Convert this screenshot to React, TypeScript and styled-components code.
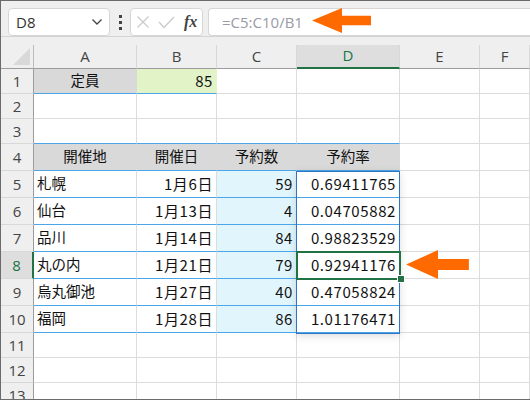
import styled, { createGlobalStyle } from "styled-components";

const GlobalStyle = createGlobalStyle`
  html, body {
    margin: 0;
    padding: 0;
    background: #fff;
  }
`;

const BLUE_LINE = "#4aa6e8";
const GRID_LINE = "#dcdcdc";

const Frame = styled.div`
  position: relative;
  width: 530px;
  height: 400px;
  box-sizing: border-box;
  border-top: 1px solid #6b6b6b;
  border-left: 1px solid #6b6b6b;
  border-bottom: 1px solid #6b6b6b;
  overflow: hidden;
  background: #fff;
  font-family: "Noto Sans CJK JP", "Open Sans", sans-serif;
`;
const Toolbar = styled.div`
  display: flex;
  align-items: stretch;
  height: 36px;
  padding: 7px 0 0 7px;
  box-sizing: border-box;
  background: #efefef;
  border-bottom: 1px solid #d4d4d4;
`;
const Box = styled.div`
  background: #fff;
  border: 1px solid #d6d6d6;
  border-radius: 4px;
  box-sizing: border-box;
  display: flex;
  align-items: center;
`;
const NameBox = styled(Box)`
  width: 102px;
  justify-content: space-between;
  padding: 0 6px 0 7px;
  font-family: "Open Sans", sans-serif;
  font-size: 15px;
  color: #333;
`;
const Dots = styled.div`
  width: 20px;
  display: flex;
  flex-direction: column;
  align-items: center;
  justify-content: center;
  gap: 3px;
  i {
    display: block;
    width: 3px;
    height: 3px;
    background: #444;
  }
`;
const FxBox = styled(Box)`
  width: 73px;
  gap: 9px;
  padding: 0 0 0 6px;
`;
const FxText = styled.span`
  font-family: "Liberation Serif", serif;
  font-style: italic;
  font-weight: bold;
  font-size: 16px;
  color: #444;
`;
const FormulaBox = styled(Box)`
  flex: 1;
  margin-left: 5px;
  padding-left: 13px;
  border-right: none;
  border-radius: 4px 0 0 4px;
  font-family: "Open Sans", sans-serif;
  font-size: 15px;
  color: #9a9aa6;
`;
const Band = styled.div`
  height: 8px;
  background: #efefef;
`;
const Sheet = styled.div`
  display: grid;
  grid-template-columns: 33px 103px 80px 80px 103px 80px 1fr;
  grid-template-rows: 24px 25px 25px 25px repeat(7, 27px) 25px 25px 25px;
`;
const Corner = styled.div`
  background: #efefef;
  border-right: 1px solid #bdbdbd;
  border-bottom: 1px solid #9c9c9c;
  box-sizing: border-box;
  display: flex;
  align-items: flex-end;
  justify-content: flex-end;
  padding: 0 3px 3px 0;
`;
const ColHead = styled.div<{ $active?: boolean }>`
  box-sizing: border-box;
  background: ${(p) => (p.$active ? "#dedede" : "#efefef")};
  border-right: 1px solid #d8d8d8;
  border-bottom: ${(p) => (p.$active ? "2px solid #217346" : "1px solid #9c9c9c")};
  color: ${(p) => (p.$active ? "#217346" : "#444")};
  font-family: "Open Sans", sans-serif;
  font-size: 15px;
  padding-bottom: 2px;
  display: flex;
  align-items: center;
  justify-content: center;
`;
const RowHead = styled.div<{ $active?: boolean }>`
  box-sizing: border-box;
  background: ${(p) => (p.$active ? "#dedede" : "#efefef")};
  border-right: ${(p) => (p.$active ? "2px solid #217346" : "1px solid #9c9c9c")};
  border-bottom: 1px solid #d8d8d8;
  color: ${(p) => (p.$active ? "#217346" : "#444")};
  font-family: "Open Sans", sans-serif;
  font-size: 15px;
  display: flex;
  align-items: center;
  justify-content: center;
`;
const Cell = styled.div<{
  $bg?: string;
  $align?: "left" | "right" | "center";
  $line?: boolean;
  $num?: boolean;
}>`
  box-sizing: border-box;
  background: ${(p) => p.$bg || "#fff"};
  border-right: 1px solid ${(p) => (p.$bg ? p.$bg : GRID_LINE)};
  border-bottom: 1px solid ${(p) => (p.$line ? BLUE_LINE : GRID_LINE)};
  padding: 0 3px 2px 3px;
  font-size: ${(p) => (p.$num ? "15px" : "14.5px")};
  letter-spacing: ${(p) => (p.$num ? "0.6px" : "0")};
  line-height: 1;
  color: #111;
  display: flex;
  align-items: center;
  white-space: nowrap;
  justify-content: ${(p) =>
    p.$align === "right" ? "flex-end" : p.$align === "center" ? "center" : "flex-start"};
`;
const RateRange = styled.div`
  position: absolute;
  left: 295px;
  top: 170px;
  width: 104px;
  height: 163px;
  box-sizing: border-box;
  border: 1px solid #2f75c5;
  box-shadow: 0 2px 8px rgba(0, 0, 0, 0.14);
  pointer-events: none;
`;
const Selected = styled.div`
  position: absolute;
  left: 295px;
  top: 250px;
  width: 105px;
  height: 29px;
  box-sizing: border-box;
  border: 2px solid #217346;
  pointer-events: none;
`;
const Handle = styled.div`
  position: absolute;
  left: 396px;
  top: 274px;
  width: 6px;
  height: 6px;
  background: #217346;
  border: 1px solid #fff;
`;
const Arrow = styled.svg<{ $x: number; $y: number }>`
  position: absolute;
  left: ${(p) => p.$x}px;
  top: ${(p) => p.$y}px;
`;

type RowData = { n: number; cells: [string, string, string, string] };

const rows: RowData[] = [
  { n: 5, cells: ["札幌", "1月6日", "59", "0.69411765"] },
  { n: 6, cells: ["仙台", "1月13日", "4", "0.04705882"] },
  { n: 7, cells: ["品川", "1月14日", "84", "0.98823529"] },
  { n: 8, cells: ["丸の内", "1月21日", "79", "0.92941176"] },
  { n: 9, cells: ["烏丸御池", "1月27日", "40", "0.47058824"] },
  { n: 10, cells: ["福岡", "1月28日", "86", "1.01176471"] },
];

const columns = ["A", "B", "C", "D", "E", "F"];
const GRAY = "#d9d9d9";
const GREEN = "#e2f3c8";
const SKY = "#e1f6fc";

const EmptyRow = ({ n }: { n: number }) => (
  <>
    <RowHead>{n}</RowHead>
    {columns.map((c) => (
      <Cell key={c} />
    ))}
  </>
);

const SheetRow = ({ row }: { row: RowData }) => (
  <>
    <RowHead $active={row.n === 8}>{row.n}</RowHead>
    <Cell $line>{row.cells[0]}</Cell>
    <Cell $line $num $align="right">
      {row.cells[1]}
    </Cell>
    <Cell $line $num $bg={SKY} $align="right">
      {row.cells[2]}
    </Cell>
    <Cell $line $num $align="right">
      {row.cells[3]}
    </Cell>
    <Cell />
    <Cell />
  </>
);

const OrangeArrow = ({ x, y, w, h }: { x: number; y: number; w: number; h: number }) => (
  <Arrow $x={x} $y={y} width={w} height={h} viewBox="0 0 62 28" preserveAspectRatio="none">
    <path d="M1 14 L31 1 L31 9 L60 9 L60 19 L31 19 L31 27 Z" fill="#ff6a00" />
  </Arrow>
);

const App = () => {
  return (
    <Frame>
      <GlobalStyle />
      <Toolbar>
        <NameBox>
          D8
          <svg width="12" height="8" viewBox="0 0 12 8">
            <path d="M1.5 1.5 L6 6 L10.5 1.5" fill="none" stroke="#444" strokeWidth="1.3" />
          </svg>
        </NameBox>
        <Dots>
          <i />
          <i />
          <i />
        </Dots>
        <FxBox>
          <svg width="12" height="12" viewBox="0 0 12 12">
            <path d="M0.5 0.5 L11.5 11.5 M11.5 0.5 L0.5 11.5" stroke="#c9c9c9" strokeWidth="1.2" />
          </svg>
          <svg width="17" height="13" viewBox="0 0 17 13">
            <path d="M1 6 L6 11.5 L16 1" fill="none" stroke="#c9c9c9" strokeWidth="1.2" />
          </svg>
          <FxText>fx</FxText>
        </FxBox>
        <FormulaBox>=C5:C10/B1</FormulaBox>
      </Toolbar>
      <Band />
      <Sheet>
        <Corner>
          <svg width="17" height="17" viewBox="0 0 17 17">
            <path d="M17 0 L17 17 L0 17 Z" fill="#d9d9d9" />
          </svg>
        </Corner>
        {columns.map((c) => (
          <ColHead key={c} $active={c === "D"}>
            {c}
          </ColHead>
        ))}

        <RowHead>1</RowHead>
        <Cell $bg={GRAY} $align="center" $line>
          定員
        </Cell>
        <Cell $bg={GREEN} $align="right" $num $line>
          85
        </Cell>
        <Cell />
        <Cell />
        <Cell />
        <Cell />

        <EmptyRow n={2} />

        <RowHead>3</RowHead>
        <Cell $line />
        <Cell $line />
        <Cell $line />
        <Cell $line />
        <Cell />
        <Cell />

        <RowHead>4</RowHead>
        {["開催地", "開催日", "予約数", "予約率"].map((t) => (
          <Cell key={t} $bg={GRAY} $align="center" $line>
            {t}
          </Cell>
        ))}
        <Cell />
        <Cell />

        {rows.map((r) => (
          <SheetRow key={r.n} row={r} />
        ))}

        <EmptyRow n={11} />
        <EmptyRow n={12} />
        <EmptyRow n={13} />
      </Sheet>
      <RateRange />
      <Selected />
      <Handle />
      <OrangeArrow x={310} y={6} w={62} h={27} />
      <OrangeArrow x={404} y={248} w={66} h={31} />
    </Frame>
  );
};

export default App;
